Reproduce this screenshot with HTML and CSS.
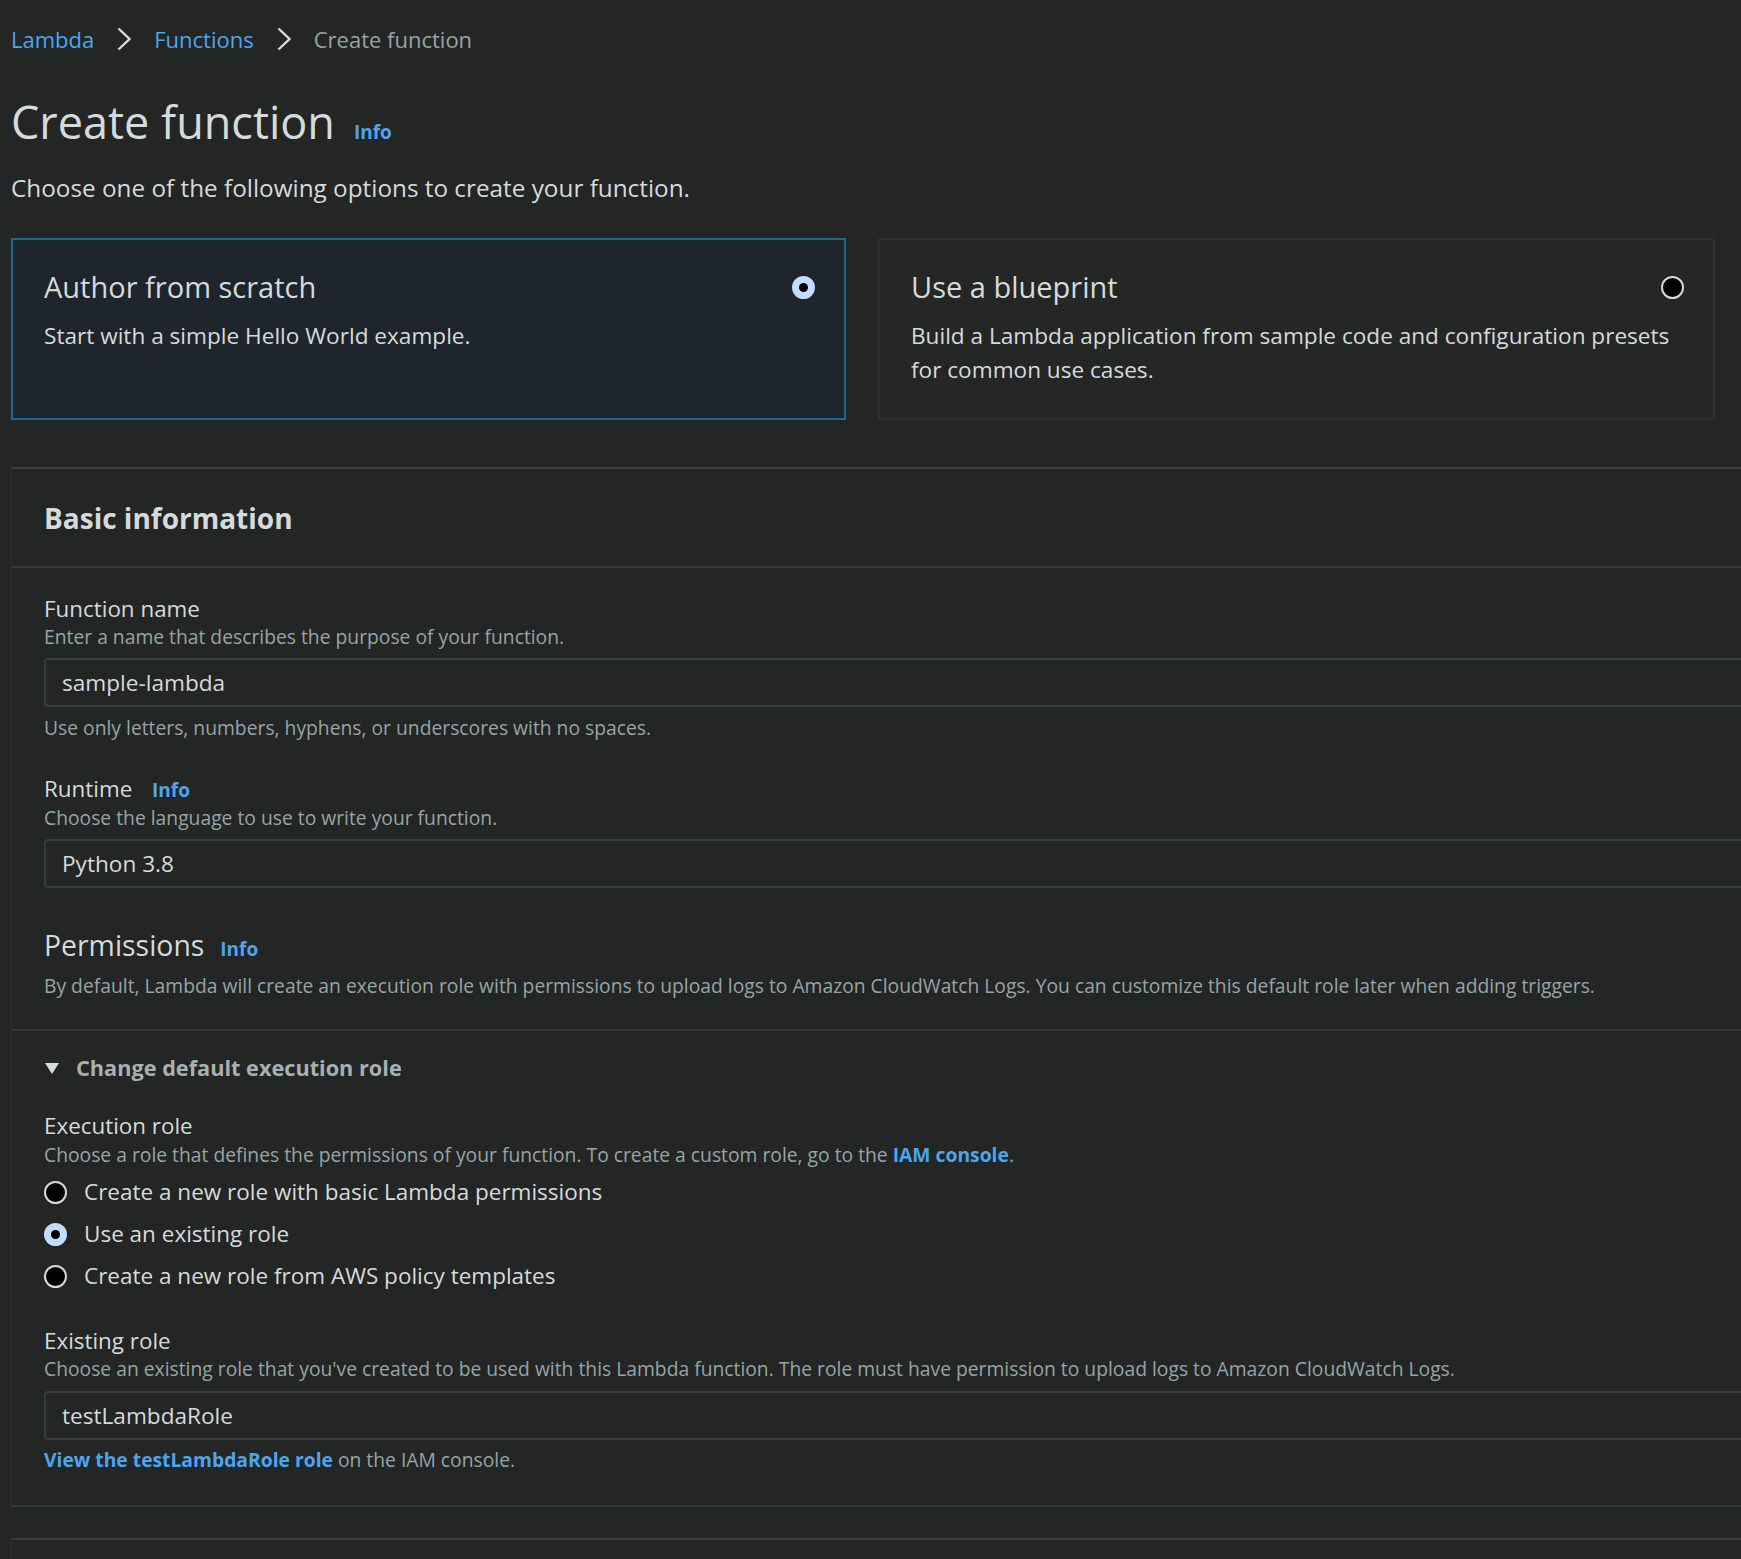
FILE: index.html
```html
<!DOCTYPE html>
<html lang="en">
<head>
<meta charset="utf-8">
<title>Create function</title>
<link rel="stylesheet" href="styles.css">
</head>
<body>
<div class="page">
  <nav class="crumbs">
    <a class="link" href="#">Lambda</a>
    <svg class="chev" width="14" height="24" viewBox="0 0 14 24"><polyline points="1.5,1.5 12.5,12 1.5,22.5" fill="none" stroke="#d5dbdb" stroke-width="2.4"/></svg>
    <a class="link" href="#">Functions</a>
    <svg class="chev" width="14" height="24" viewBox="0 0 14 24"><polyline points="1.5,1.5 12.5,12 1.5,22.5" fill="none" stroke="#d5dbdb" stroke-width="2.4"/></svg>
    <span class="current">Create function</span>
  </nav>

  <header class="head">
    <h1>Create function</h1>
    <a class="info" href="#">Info</a>
  </header>
  <p class="lead">Choose one of the following options to create your function.</p>

  <div class="tiles">
    <div class="tile selected">
      <div class="tile-top">
        <h3 class="tile-title">Author from scratch</h3>
        <span class="radio on"></span>
      </div>
      <p class="tile-desc">Start with a simple Hello World example.</p>
    </div>
    <div class="tile">
      <div class="tile-top">
        <h3 class="tile-title">Use a blueprint</h3>
        <span class="radio"></span>
      </div>
      <p class="tile-desc">Build a Lambda application from sample code and configuration presets for common use cases.</p>
    </div>
  </div>

  <section class="panel">
    <div class="panel-head"><h2>Basic information</h2></div>
    <div class="panel-body">
      <div class="field">
        <div class="label">Function name</div>
        <div class="desc">Enter a name that describes the purpose of your function.</div>
        <div class="input">sample-lambda</div>
        <div class="hint">Use only letters, numbers, hyphens, or underscores with no spaces.</div>
      </div>
      <div class="field field-runtime">
        <div class="label">Runtime <a class="info small" href="#">Info</a></div>
        <div class="desc">Choose the language to use to write your function.</div>
        <div class="input">Python 3.8</div>
      </div>
      <div class="perm">
        <div class="perm-title">Permissions <a class="info" href="#">Info</a></div>
        <div class="desc">By default, Lambda will create an execution role with permissions to upload logs to Amazon CloudWatch Logs. You can customize this default role later when adding triggers.</div>
      </div>
    </div>
    <div class="expand">
      <div class="expand-head">
        <svg class="caret" width="16" height="14" viewBox="0 0 16 14"><polygon points="1,2 15,2 8,13" fill="#d5dbdb"/></svg>
        <span>Change default execution role</span>
      </div>
      <div class="field field-exec">
        <div class="label">Execution role</div>
        <div class="desc">Choose a role that defines the permissions of your function. To create a custom role, go to the <a class="strong-link" href="#">IAM console</a>.</div>
        <div class="radios">
          <div class="opt"><span class="radio"></span><span>Create a new role with basic Lambda permissions</span></div>
          <div class="opt"><span class="radio on"></span><span>Use an existing role</span></div>
          <div class="opt"><span class="radio"></span><span>Create a new role from AWS policy templates</span></div>
        </div>
      </div>
      <div class="field field-existing">
        <div class="label">Existing role</div>
        <div class="desc">Choose an existing role that you've created to be used with this Lambda function. The role must have permission to upload logs to Amazon CloudWatch Logs.</div>
        <div class="input">testLambdaRole</div>
        <div class="hint"><a class="strong-link" href="#">View the testLambdaRole role</a> on the IAM console.</div>
      </div>
    </div>
  </section>
  <section class="panel panel-next"></section>
</div>
</body>
</html>
```

FILE: styles.css
```css
* { box-sizing: border-box; }
html, body { margin: 0; padding: 0; }
body {
  background: #242525;
  color: #d5dbdb;
  font-family: "Open Sans", Roboto, "Liberation Sans", sans-serif;
  overflow: hidden;
  width: 1741px;
  height: 1559px;
}
.page {
  padding: 24px 0 0 11px;
  width: 1900px;
}
a { text-decoration: none; }
.link, .info, .strong-link { color: #4ca6ee; }

.crumbs {
  display: flex;
  align-items: center;
  gap: 23px;
  font-size: 22px;
  line-height: 30px;
  height: 30px;
}
.crumbs .current { color: #95a5a6; }
.chev { display: block; }

.head {
  display: flex;
  align-items: baseline;
  gap: 19px;
  margin-top: 40px;
}
.head h1 {
  margin: 0;
  font-size: 45px;
  line-height: 56px;
  font-weight: 400;
  color: #d5dbdb;
}
.info { font-size: 19px; font-weight: 700; }

.lead {
  margin: 23px 0 0;
  font-size: 24.3px;
  line-height: 30px;
}

.tiles {
  display: grid;
  grid-template-columns: 835px 837px;
  gap: 32px;
  margin-top: 35px;
  height: 182px;
}
.tile {
  border: 2px solid #2b2f2f;
  background: #252626;
  padding: 29px 29px 20px 31px;
}
.tile.selected {
  background: #1f252c;
  border-color: #1b6a94;
}
.tile-top {
  display: flex;
  justify-content: space-between;
  align-items: center;
}
.tile-title {
  margin: 0;
  font-size: 29px;
  line-height: 36px;
  font-weight: 400;
}
.tile-desc {
  margin: 14px 0 0;
  font-size: 22.6px;
  line-height: 34px;
}

.radio {
  width: 23px;
  height: 23px;
  border-radius: 50%;
  background: #000;
  border: 2px solid #d5dbdb;
  display: inline-flex;
  align-items: center;
  justify-content: center;
  flex: none;
}
.radio.on {
  background: #c4dcff;
  border-color: #c4dcff;
}
.radio.on::after {
  content: "";
  width: 9px;
  height: 9px;
  border-radius: 50%;
  background: #000;
}

.panel {
  margin-top: 47px;
  border-top: 2px solid #3b3e3e;
  border-left: 1px solid #2f3333;
  width: 1800px;
}
.panel-head {
  padding: 30px 32px 29px;
  border-bottom: 2px solid #363b3b;
}
.panel-head h2 {
  margin: 0;
  font-size: 28px;
  line-height: 38px;
  font-weight: 700;
}
.panel-body {
  padding: 27px 32px 30px;
  border-bottom: 2px solid #333a3a;
}
.label {
  font-size: 22.4px;
  line-height: 28px;
}
.label .info { margin-left: 14px; }
.desc {
  margin-top: 1px;
  font-size: 19.3px;
  line-height: 26px;
  color: #95a5a6;
}
.input {
  margin-top: 8px;
  height: 49px;
  border: 2px solid #344040;
  border-radius: 4px;
  padding: 0 16px;
  font-size: 22.6px;
  line-height: 45px;
}
.hint {
  margin-top: 8px;
  font-size: 19.3px;
  line-height: 26px;
  color: #95a5a6;
}
.field-runtime { margin-top: 34px; }
.perm { margin-top: 38px; }
.perm-title {
  font-size: 28.4px;
  line-height: 38px;
  display: flex;
  align-items: baseline;
  gap: 16px;
}
.perm .desc { margin-top: 5px; }

.expand {
  padding: 23px 32px 32px;
  border-bottom: 2px solid #333a3a;
}
.expand-head {
  display: flex;
  align-items: center;
  gap: 16px;
  font-size: 21.7px;
  line-height: 28px;
  font-weight: 700;
  color: #a8b1b1;
}
.caret { display: block; }
.expand-head + .field { margin-top: 30px; }
.field-exec .desc { margin-top: 2px; }
.strong-link { font-weight: 700; }
.radios {
  margin-top: 8px;
  display: flex;
  flex-direction: column;
  gap: 10px;
}
.opt {
  display: flex;
  align-items: center;
  gap: 17px;
  font-size: 22.5px;
  line-height: 32px;
}
.field-existing { margin-top: 35px; }
.field-existing .input { margin-top: 9px; }
.field-existing .hint { margin-top: 7px; }

.panel-next {
  margin-top: 31px;
  height: 40px;
  border-bottom: none;
}
```
